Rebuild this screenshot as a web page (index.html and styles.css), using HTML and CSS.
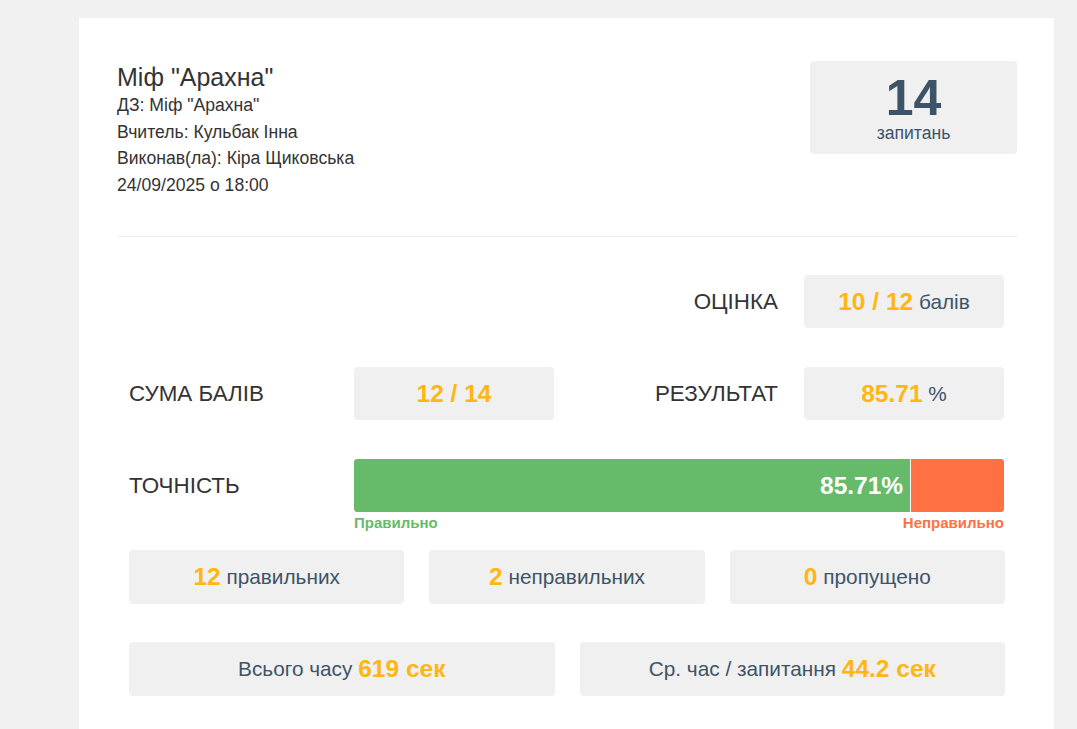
FILE: index.html
```html
<!DOCTYPE html>
<html lang="uk">
<head>
<meta charset="utf-8">
<title>Міф "Арахна"</title>
<link rel="stylesheet" href="styles.css">
</head>
<body>
<div class="card">
  <div class="header">
    <div class="info">
      <h1 class="title">Міф "Арахна"</h1>
      <div class="meta">ДЗ: Міф "Арахна"</div>
      <div class="meta">Вчитель: Кульбак Інна</div>
      <div class="meta">Виконав(ла): Кіра Щиковська</div>
      <div class="meta">24/09/2025 о 18:00</div>
    </div>
    <div class="count-box">
      <div class="count-num">14</div>
      <div class="count-label">запитань</div>
    </div>
  </div>
  <div class="divider"></div>
  <div class="stats">
    <div class="row4 row-grade">
      <div class="label label-right col3">ОЦІНКА</div>
      <div class="box"><span class="hl">10 / 12</span>&nbsp;балів</div>
    </div>
    <div class="row4">
      <div class="label">СУМА БАЛІВ</div>
      <div class="box"><span class="hl">12 / 14</span></div>
      <div class="label label-right">РЕЗУЛЬТАТ</div>
      <div class="box"><span class="hl">85.71</span>&nbsp;%</div>
    </div>
    <div class="row4 row-acc">
      <div class="label">ТОЧНІСТЬ</div>
      <div class="acc">
        <div class="bar">
          <div class="bar-ok" style="width: 85.71%">85.71%</div>
          <div class="bar-bad"></div>
        </div>
        <div class="legend">
          <span class="legend-ok">Правильно</span>
          <span class="legend-bad">Неправильно</span>
        </div>
      </div>
    </div>
    <div class="row3">
      <div class="box"><span class="hl">12</span>&nbsp;правильних</div>
      <div class="box"><span class="hl">2</span>&nbsp;неправильних</div>
      <div class="box"><span class="hl">0</span>&nbsp;пропущено</div>
    </div>
    <div class="row2">
      <div class="box">Всього часу&nbsp;<span class="hl">619 сек</span></div>
      <div class="box">Ср. час / запитання&nbsp;<span class="hl">44.2 сек</span></div>
    </div>
  </div>
</div>
</body>
</html>
```

FILE: styles.css
```css
html, body {
  margin: 0;
  padding: 0;
}
body {
  background: #f1f1f1;
  font-family: "Liberation Sans", Arial, sans-serif;
  color: #333;
}
.card {
  margin: 18px 0 0 79px;
  width: 975px;
  box-sizing: border-box;
  background: #fff;
  padding: 43px 37px 40px 38px;
  min-height: 730px;
}
.header {
  display: flex;
  justify-content: space-between;
  align-items: flex-start;
}
.title {
  margin: 2px 0 0;
  font-size: 25px;
  font-weight: normal;
  line-height: 29px;
  color: #333;
}
.meta {
  font-size: 17.6px;
  line-height: 26.5px;
  color: #333;
}
.count-box {
  width: 207px;
  height: 93px;
  background: #f0f0f0;
  border-radius: 4px;
  display: flex;
  flex-direction: column;
  align-items: center;
  justify-content: center;
  color: #3d5468;
}
.count-num {
  font-size: 50px;
  font-weight: bold;
  line-height: 48px;
  margin-top: 3px;
}
.count-label {
  font-size: 17.6px;
  line-height: 22px;
}
.divider {
  height: 1px;
  background: #eeeeee;
  margin: 38px 0 38px;
}
.stats {
  padding: 0 12px;
}
.row4 {
  display: grid;
  grid-template-columns: 200px 200px 200px 200px;
  column-gap: 25px;
  margin-bottom: 39px;
}
.row-grade .col3 {
  grid-column: 3;
}
.row-acc {
  margin-bottom: 16px;
}
.label {
  font-size: 22.4px;
  line-height: 53px;
  height: 53px;
  color: #333;
}
.label-right {
  text-align: right;
  padding-right: 1px;
}
.box {
  height: 53px;
  background: #f0f0f0;
  border-radius: 4px;
  display: flex;
  align-items: center;
  justify-content: center;
  font-size: 20.8px;
  color: #3d5468;
}
.hl {
  color: #ffb612;
  font-weight: bold;
  font-size: 24.5px;
}
.acc {
  grid-column: 2 / span 3;
}
.bar {
  display: flex;
  height: 53px;
  border-radius: 4px;
  overflow: hidden;
  background: #ff7043;
}
.bar-ok {
  background: #66bb6a;
  color: #fff;
  font-weight: bold;
  font-size: 24.5px;
  display: flex;
  align-items: center;
  justify-content: flex-end;
  padding-right: 7px;
  box-sizing: border-box;
  border-right: 1px solid #fff;
}
.bar-bad {
  flex: 1;
  background: #ff7043;
}
.legend {
  display: flex;
  justify-content: space-between;
  font-size: 15px;
  font-weight: bold;
  line-height: 22px;
}
.legend-ok {
  color: #66bb6a;
}
.legend-bad {
  color: #ff7043;
}
.row3 {
  display: grid;
  grid-template-columns: repeat(3, 1fr);
  column-gap: 25px;
  margin-bottom: 38px;
}
.row3 .box, .row2 .box {
  height: 54px;
}
.row2 {
  display: grid;
  grid-template-columns: repeat(2, 1fr);
  column-gap: 25px;
}
```
